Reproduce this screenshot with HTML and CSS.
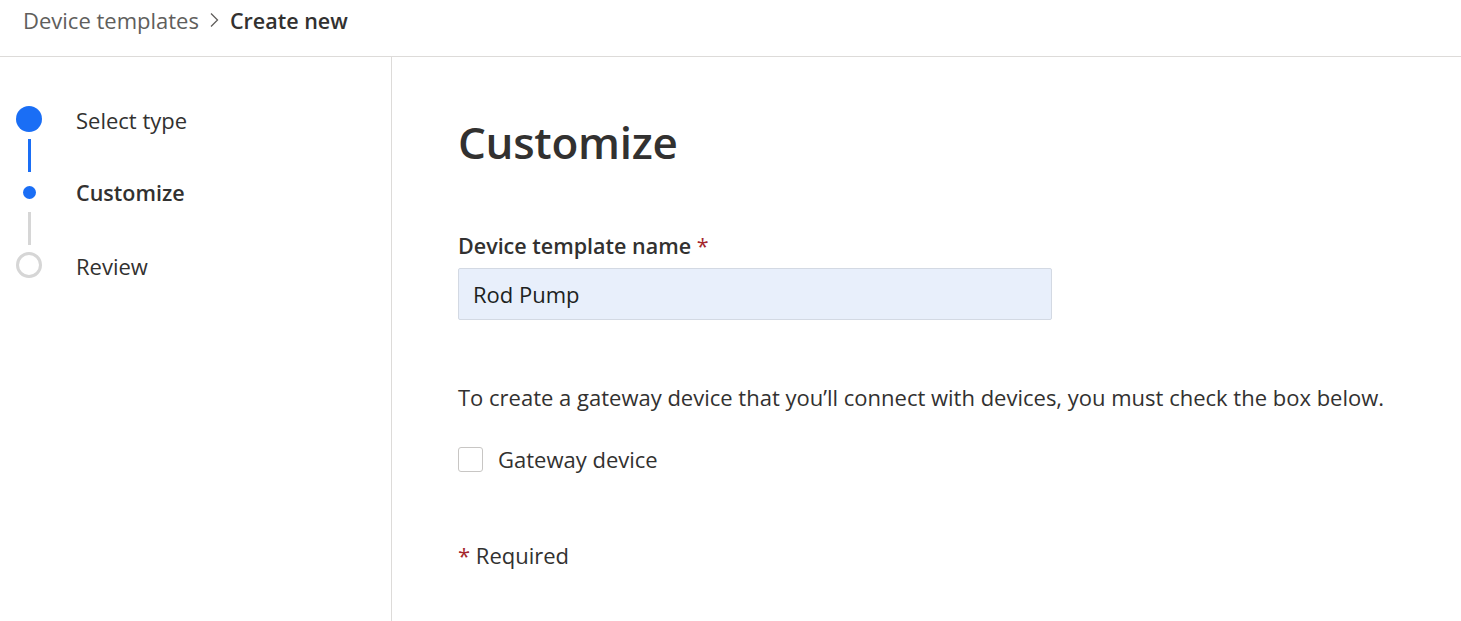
FILE: index.html
```html
<!DOCTYPE html>
<html lang="en">
<head>
<meta charset="utf-8">
<title>Create new device template</title>
<link rel="stylesheet" href="styles.css">
</head>
<body>
<header class="topbar">
  <nav class="breadcrumb">
    <span class="crumb">Device templates</span>
    <svg class="chev" width="9" height="16" viewBox="0 0 9 16"><path d="M1 1.5 L7.5 8 L1 14.5" fill="none" stroke="#605e5c" stroke-width="1.3"/></svg>
    <span class="crumb current">Create new</span>
  </nav>
</header>
<div class="layout">
  <aside class="sidebar">
    <ol class="steps">
      <li class="step">
        <span class="ind"><span class="circle done"></span></span>
        <span class="label">Select type</span>
      </li>
      <li class="conn"><span class="line blue"></span></li>
      <li class="step">
        <span class="ind"><span class="dot"></span></span>
        <span class="label active">Customize</span>
      </li>
      <li class="conn"><span class="line gray"></span></li>
      <li class="step">
        <span class="ind"><span class="circle todo"></span></span>
        <span class="label">Review</span>
      </li>
    </ol>
  </aside>
  <main class="content">
    <h1 class="title">Customize</h1>
    <label class="field-label" for="name">Device template name <span class="req">*</span></label>
    <input id="name" class="text-input" type="text" value="Rod Pump">
    <p class="hint">To create a gateway device that you’ll connect with devices, you must check the box below.</p>
    <label class="check">
      <span class="box"></span>
      <span class="check-text">Gateway device</span>
    </label>
    <p class="required"><span class="req">*</span> Required</p>
  </main>
</div>
</body>
</html>
```

FILE: styles.css
```css
html, body {
  margin: 0;
  padding: 0;
  height: 100%;
}
body {
  font-family: "Open Sans", "Noto Sans", sans-serif;
  color: #323130;
  background: #fff;
  display: flex;
  flex-direction: column;
}
.topbar {
  height: 57px;
  border-bottom: 1px solid #dddbd9;
  box-sizing: border-box;
  flex: none;
}
.breadcrumb {
  display: flex;
  align-items: center;
  height: 40px;
  padding-left: 23px;
  font-size: 22px;
}
.crumb {
  color: #605e5c;
}
.crumb.current {
  color: #323130;
  font-weight: 600;
  font-size: 21.5px;
}
.chev {
  margin: 0 11px 0 11px;
}
.layout {
  flex: 1;
  display: flex;
}
.sidebar {
  width: 392px;
  border-right: 1px solid #dddbd9;
  box-sizing: border-box;
  flex: none;
  padding-top: 49px;
}
.steps {
  list-style: none;
  margin: 0;
  padding: 0 0 0 16px;
}
.step {
  display: flex;
  align-items: center;
  height: 26px;
}
.ind {
  width: 26px;
  height: 26px;
  display: flex;
  align-items: center;
  justify-content: center;
  flex: none;
}
.circle {
  width: 26px;
  height: 26px;
  border-radius: 50%;
  box-sizing: border-box;
}
.circle.done {
  background: #1a6ef5;
}
.circle.todo {
  border: 3px solid #d6d6d6;
}
.dot {
  width: 13px;
  height: 13px;
  border-radius: 50%;
  background: #1a6ef5;
}
.conn {
  height: 33px;
  width: 26px;
  margin: 7px 0;
  display: flex;
  justify-content: center;
}
.line {
  width: 3px;
  height: 100%;
}
.line.blue { background: #1a6ef5; }
.line.gray { background: #d6d6d6; }
.label {
  margin-left: 34px;
  padding-top: 2px;
  font-size: 22px;
  color: #323130;
}
.label.active {
  font-weight: 600;
  font-size: 21.5px;
  padding-top: 0;
}
.content {
  flex: 1;
  padding-left: 66px;
}
.title {
  margin: 55px 0 0;
  font-size: 44px;
  font-weight: 600;
  line-height: 60px;
  letter-spacing: -0.3px;
}
.field-label {
  display: block;
  margin-top: 60px;
  font-size: 21.5px;
  font-weight: 600;
  line-height: 28px;
}
.req {
  color: #a4262c;
  font-weight: 400;
}
.text-input {
  display: block;
  margin-top: 8px;
  width: 594px;
  height: 52px;
  box-sizing: border-box;
  border: 1px solid #d3d9e3;
  border-radius: 2px;
  background: #e8effb;
  padding: 0 14px;
  font-family: inherit;
  font-size: 22px;
  color: #201f1e;
}
.hint {
  margin: 63px 0 0;
  font-size: 22px;
  line-height: 28px;
}
.check {
  display: flex;
  align-items: center;
  margin-top: 33px;
}
.box {
  width: 25px;
  height: 25px;
  box-sizing: border-box;
  border: 1px solid #c8c6c4;
  border-radius: 3px;
  flex: none;
}
.check-text {
  margin-left: 15px;
  font-size: 22px;
}
.required {
  margin: 67px 0 0;
  font-size: 22px;
  line-height: 28px;
}
```
